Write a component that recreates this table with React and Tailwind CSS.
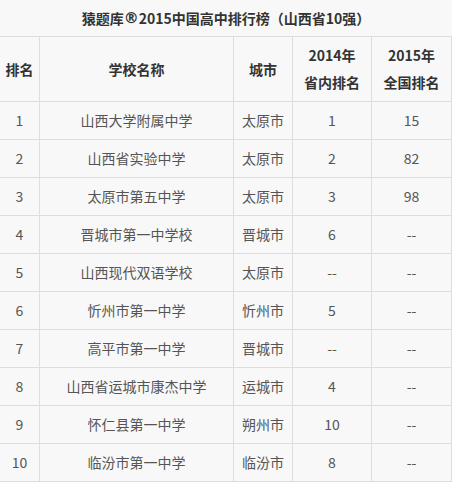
import React from "react";

const rows = [
  ["1", "山西大学附属中学", "太原市", "1", "15"],
  ["2", "山西省实验中学", "太原市", "2", "82"],
  ["3", "太原市第五中学", "太原市", "3", "98"],
  ["4", "晋城市第一中学校", "晋城市", "6", "--"],
  ["5", "山西现代双语学校", "太原市", "--", "--"],
  ["6", "忻州市第一中学", "忻州市", "5", "--"],
  ["7", "高平市第一中学", "晋城市", "--", "--"],
  ["8", "山西省运城市康杰中学", "运城市", "4", "--"],
  ["9", "怀仁县第一中学", "朔州市", "10", "--"],
  ["10", "临汾市第一中学", "临汾市", "8", "--"],
];

const widths = ["w-[40px]", "w-[194px]", "w-[59px]", "w-[79px]", "w-[80px]"];

export default function App() {
  return (
    <div
      className="w-[452px] h-[482px] bg-[#f8f8f8] text-[14px] overflow-hidden"
      style={{ fontFamily: '"Noto Sans CJK SC", "Noto Sans", sans-serif' }}
    >
      <div className="h-[37px] flex items-center justify-center border-b border-[#dddddd] font-bold text-[#333333]">
        <span>猿题库</span>
        <span className="font-['DejaVu_Sans',sans-serif] font-bold text-[15px] leading-none">®</span>
        <span>2015中国高中排行榜（山西省10强）</span>
      </div>
      <div className="h-[65px] flex border-b border-[#dddddd] font-bold text-[#333333]">
        <div className={`${widths[0]} border-r border-[#dddddd] flex items-center justify-center`}>排名</div>
        <div className={`${widths[1]} border-r border-[#dddddd] flex items-center justify-center`}>学校名称</div>
        <div className={`${widths[2]} border-r border-[#dddddd] flex items-center justify-center`}>城市</div>
        <div className={`${widths[3]} border-r border-[#dddddd] flex flex-col items-center justify-center leading-[27px]`}>
          <span>2014年</span>
          <span>省内排名</span>
        </div>
        <div className={`${widths[4]} border-r border-[#dddddd] flex flex-col items-center justify-center leading-[27px]`}>
          <span>2015年</span>
          <span>全国排名</span>
        </div>
      </div>
      {rows.map((r, i) => (
        <div key={i} className="h-[38px] flex border-b border-[#dddddd] text-[#555555]">
          {r.map((c, j) => (
            <div
              key={j}
              className={`${widths[j]} border-r border-[#dddddd] flex items-center justify-center`}
            >
              {c}
            </div>
          ))}
        </div>
      ))}
    </div>
  );
}
